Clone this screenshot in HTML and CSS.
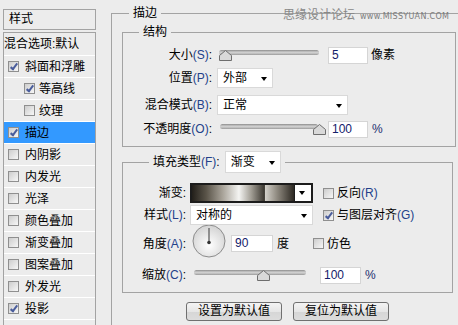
FILE: index.html
```html
<!DOCTYPE html>
<html lang="zh-CN">
<head>
    <meta charset="UTF-8">
    <meta name="viewport" content="width=device-width, initial-scale=1.0">
    <title>图层样式 - 描边</title>
    <link rel="stylesheet" href="styles.css">
</head>
<body>
<div class="dialog">
    <!-- 左侧：样式列表 -->
    <div class="styles-panel">
        <div class="panel-title">样式</div>
        <ul class="style-list">
            <li class="blend">混合选项:默认</li>
            <li><span class="cb checked"></span>斜面和浮雕</li>
            <li class="sub"><span class="cb checked"></span>等高线</li>
            <li class="sub"><span class="cb"></span>纹理</li>
            <li class="active"><span class="cb checked"></span>描边</li>
            <li><span class="cb"></span>内阴影</li>
            <li><span class="cb"></span>内发光</li>
            <li><span class="cb"></span>光泽</li>
            <li><span class="cb"></span>颜色叠加</li>
            <li><span class="cb"></span>渐变叠加</li>
            <li><span class="cb"></span>图案叠加</li>
            <li><span class="cb"></span>外发光</li>
            <li><span class="cb checked"></span>投影</li>
            <li></li>
        </ul>
    </div>

    <!-- 右侧：描边设置 -->
    <div class="settings">
        <fieldset class="group outer">
            <legend>描边</legend>

            <fieldset class="group structure">
                <legend>结构</legend>
                <div class="row r-size">
                    <span class="label">大小<span class="key">(S)</span>:</span>
                    <div class="slider s-size">
                        <div class="track"></div>
                        <svg class="thumb" style="left:0%" width="13" height="11" viewBox="0 0 13 11"><polygon points="0.5,10.5 0.5,5.5 6.5,0.5 12.5,5.5 12.5,10.5" fill="#d9d9d9" stroke="#6e6e6e"/></svg>
                    </div>
                    <span class="field">5</span>
                    <span class="unit">像素</span>
                </div>
                <div class="row r-pos">
                    <span class="label">位置<span class="key">(P)</span>:</span>
                    <span class="select sel-pos">外部</span>
                </div>
                <div class="row r-blend">
                    <span class="label">混合模式<span class="key">(B)</span>:</span>
                    <span class="select sel-blend">正常</span>
                </div>
                <div class="row r-opacity">
                    <span class="label">不透明度<span class="key">(O)</span>:</span>
                    <div class="slider s-opacity">
                        <div class="track"></div>
                        <svg class="thumb" style="left:95%" width="13" height="11" viewBox="0 0 13 11"><polygon points="0.5,10.5 0.5,5.5 6.5,0.5 12.5,5.5 12.5,10.5" fill="#d9d9d9" stroke="#6e6e6e"/></svg>
                    </div>
                    <span class="field">100</span>
                    <span class="unit pct">%</span>
                </div>
            </fieldset>

            <fieldset class="group fill">
                <legend>
                    <span>填充类型<span class="key">(F)</span>:</span>
                    <span class="select sel-type">渐变</span>
                </legend>
                <div class="row r-grad">
                    <span class="label">渐变:</span>
                    <div class="gradient">
                        <span class="swatch"></span>
                        <span class="grad-arrow"></span>
                    </div>
                    <span class="check"><span class="cb"></span>反向<span class="key">(R)</span></span>
                </div>
                <div class="row r-style">
                    <span class="label">样式<span class="key">(L)</span>:</span>
                    <span class="select sel-style">对称的</span>
                    <span class="check"><span class="cb checked"></span>与图层对齐<span class="key">(G)</span></span>
                </div>
                <div class="row r-angle">
                    <span class="label">角度<span class="key">(A)</span>:</span>
                    <svg class="dial" width="34" height="34" viewBox="0 0 34 34">
                        <defs>
                            <radialGradient id="dialFill" cx="50%" cy="62%" r="62%">
                                <stop offset="0" stop-color="#ffffff"/>
                                <stop offset="1" stop-color="#d2d2d2"/>
                            </radialGradient>
                        </defs>
                        <circle cx="17" cy="17" r="16" fill="url(#dialFill)" stroke="#8c8c8c"/>
                        <line x1="17" y1="18" x2="17" y2="4" stroke="#555" stroke-width="1.2"/>
                        <circle cx="17" cy="18.5" r="1.8" fill="#333"/>
                    </svg>
                    <span class="field">90</span>
                    <span class="unit deg">度</span>
                    <span class="check dither"><span class="cb"></span>仿色</span>
                </div>
                <div class="row r-scale">
                    <span class="label">缩放<span class="key">(C)</span>:</span>
                    <div class="slider s-scale">
                        <div class="track"></div>
                        <svg class="thumb" style="left:56%" width="13" height="11" viewBox="0 0 13 11"><polygon points="0.5,10.5 0.5,5.5 6.5,0.5 12.5,5.5 12.5,10.5" fill="#d9d9d9" stroke="#6e6e6e"/></svg>
                    </div>
                    <span class="field">100</span>
                    <span class="unit pct">%</span>
                </div>
            </fieldset>

            <div class="buttons">
                <button class="btn">设置为默认值</button>
                <button class="btn">复位为默认值</button>
            </div>
        </fieldset>
    </div>

    <!-- 水印 -->
    <div class="watermark">思缘设计论坛<span class="url">www.MISSYUAN.COM</span></div>
</div>
</body>
</html>
```

FILE: styles.css
```css
body {
    margin: 0;
    background-color: #ececec;
    color: #000;
    font-family: "Liberation Sans", "Noto Sans CJK SC", sans-serif;
    font-size: 12px;
    line-height: 16px;
    overflow: hidden;
}
.dialog {
    position: relative;
    display: flex;
    align-items: flex-start;
    height: 325px;
    overflow: hidden;
}

/* 左侧列表 */
.styles-panel {
    width: 93px;
    margin: 9px 0 0 3px;
    flex-shrink: 0;
}
.panel-title {
    height: 19px;
    line-height: 19px;
    padding-left: 5px;
    border: 1px solid #a3a3a3;
}
.style-list {
    list-style: none;
    margin: 2px 0 0;
    padding: 0;
    border: 1px solid #a3a3a3;
    border-bottom: none;
}
.style-list li {
    display: flex;
    align-items: center;
    height: 21px;
    padding-left: 4px;
    border-bottom: 1px solid #fff;
}
.style-list li.blend {
    height: 22px;
    padding-left: 0;
}
.style-list li.sub {
    padding-left: 20px;
}
.style-list li.active {
    background-color: #3399ff;
}
.cb {
    position: relative;
    flex-shrink: 0;
    width: 11px;
    height: 11px;
    margin-right: 6px;
    box-sizing: border-box;
    border: 1px solid #8f8f8f;
    background: linear-gradient(135deg, #cdcdcd, #f7f7f7);
}
.style-list li.sub .cb {
    margin-right: 4px;
}
.cb.checked::after {
    content: "";
    position: absolute;
    left: 3px;
    top: 0;
    width: 2px;
    height: 6px;
    border: solid #4a5d9c;
    border-width: 0 2px 2px 0;
    transform: rotate(38deg);
}

/* 右侧设置 */
.settings {
    margin-left: 15px;
    flex-shrink: 0;
}
.group {
    margin: 0;
    min-width: 0;
    box-sizing: border-box;
    border: 1px solid #a3a3a3;
}
.group > legend {
    padding: 0 4px;
    line-height: 16px;
}
.outer {
    width: 400px;
    height: 360px;
    margin-top: 5px;
    padding: 3px 0 0 10px;
}
.outer > legend {
    margin-left: 7px;
}
.structure {
    width: 334px;
    padding: 6px 0 8px;
}
.structure > legend {
    margin-left: 16px;
}
.row {
    display: flex;
    align-items: center;
}
.label {
    flex-shrink: 0;
    text-align: right;
}
.key {
    color: #23418a;
}
.structure .label {
    width: 89px;
}
.r-size { height: 18px; }
.r-pos { height: 20px; margin-top: 4px; }
.r-blend { height: 20px; margin-top: 7px; }
.r-opacity { height: 18px; margin-top: 5px; }

/* 滑块 */
.slider {
    position: relative;
    height: 13px;
}
.track {
    height: 5px;
    margin-top: 1px;
    border-radius: 3px;
    background: linear-gradient(#8c8c8c, #d2d2d2 45%, #bcbcbc 75%, #989898);
}
.thumb {
    position: absolute;
    top: 1px;
    display: block;
}
.s-size { width: 100px; margin-left: 7px; }
.s-opacity { width: 98px; margin-left: 8px; }

/* 输入框 */
.field {
    width: 40px;
    height: 17px;
    box-sizing: border-box;
    padding-left: 3px;
    line-height: 15px;
    background-color: #fff;
    border: 1px solid #d5d5d5;
    color: #14206a;
}
.r-size .field { margin-left: 9px; }
.r-opacity .field { margin-left: 10px; }
.unit { margin-left: 3px; }
.pct { margin-left: 4px; color: #1c2f70; }

/* 下拉框 */
.select {
    position: relative;
    height: 20px;
    box-sizing: border-box;
    padding-left: 5px;
    line-height: 18px;
    background-color: #fff;
    border: 1px solid #d9d9d9;
}
.select::after {
    content: "";
    position: absolute;
    right: 5px;
    top: 8px;
    border-style: solid;
    border-width: 4px 3.5px 0;
    border-color: #000 transparent transparent;
}
.sel-pos { width: 56px; margin-left: 5px; }
.sel-blend { width: 131px; margin-left: 5px; }

/* 填充类型 */
.fill {
    width: 331px;
    margin-top: 4px;
    padding: 0 0 8px;
}
.fill > legend {
    display: flex;
    align-items: center;
    gap: 5px;
    margin-left: 26px;
}
.sel-type {
    width: 56px;
    height: 22px;
    line-height: 20px;
}
.sel-type::after { top: 9px; }
.fill .label {
    width: 63px;
}
.r-grad { height: 20px; margin-top: 10px; }
.r-style { height: 20px; margin-top: 2px; }
.r-angle { height: 33px; margin-top: 2px; }
.r-scale { height: 18px; margin-top: 6px; }

.gradient {
    display: flex;
    width: 123px;
    height: 20px;
    margin-left: 4px;
    box-sizing: border-box;
    border: 2px solid #1c1c1c;
}
.swatch {
    flex: 1;
    background: linear-gradient(to right, #221f1a 0%, #5a5449 14%, #a8a399 30%, #f4f4f2 46%, #a29e95 58%, #3a362f 71%, #d2cfc8 72%, #8b867c 84%, #2c2822 100%);
}
.grad-arrow {
    position: relative;
    width: 16px;
    border-left: 1px solid #1c1c1c;
    background-color: #fff;
}
.grad-arrow::after {
    content: "";
    position: absolute;
    left: 4px;
    top: 6px;
    border-style: solid;
    border-width: 4px 3.5px 0;
    border-color: #000 transparent transparent;
}
.sel-style { width: 123px; margin-left: 4px; }
.check {
    display: flex;
    align-items: center;
    margin-left: 10px;
}
.check .cb {
    margin-right: 3px;
}
.dial {
    display: block;
    margin: 0 0 5px 6px;
}
.r-angle .field { width: 42px; margin-left: 5px; }
.deg { margin-left: 4px; }
.dither { margin-left: 24px; }
.s-scale { width: 112px; margin-left: 8px; }
.r-scale .field { width: 41px; margin-left: 14px; }

/* 按钮 */
.buttons {
    display: flex;
    gap: 11px;
    margin: 9px 0 0 64px;
}
.btn {
    width: 96px;
    height: 19px;
    padding: 0;
    font-family: "Liberation Sans", "Noto Sans CJK SC", sans-serif;
    font-size: 12px;
    line-height: 17px;
    color: #000;
    border: 1px solid #707070;
    border-radius: 3px;
    background: linear-gradient(#f4f4f4, #e6e6e6 50%, #d6d6d6 51%, #dcdcdc);
}

/* 水印 */
.watermark {
    position: absolute;
    left: 283px;
    top: 7px;
    color: #888;
    line-height: 16px;
}
.watermark .url {
    margin-left: 5px;
    font-family: "DejaVu Sans", sans-serif;
    font-size: 8px;
    letter-spacing: 0.3px;
    color: #7c7c7c;
}
```
